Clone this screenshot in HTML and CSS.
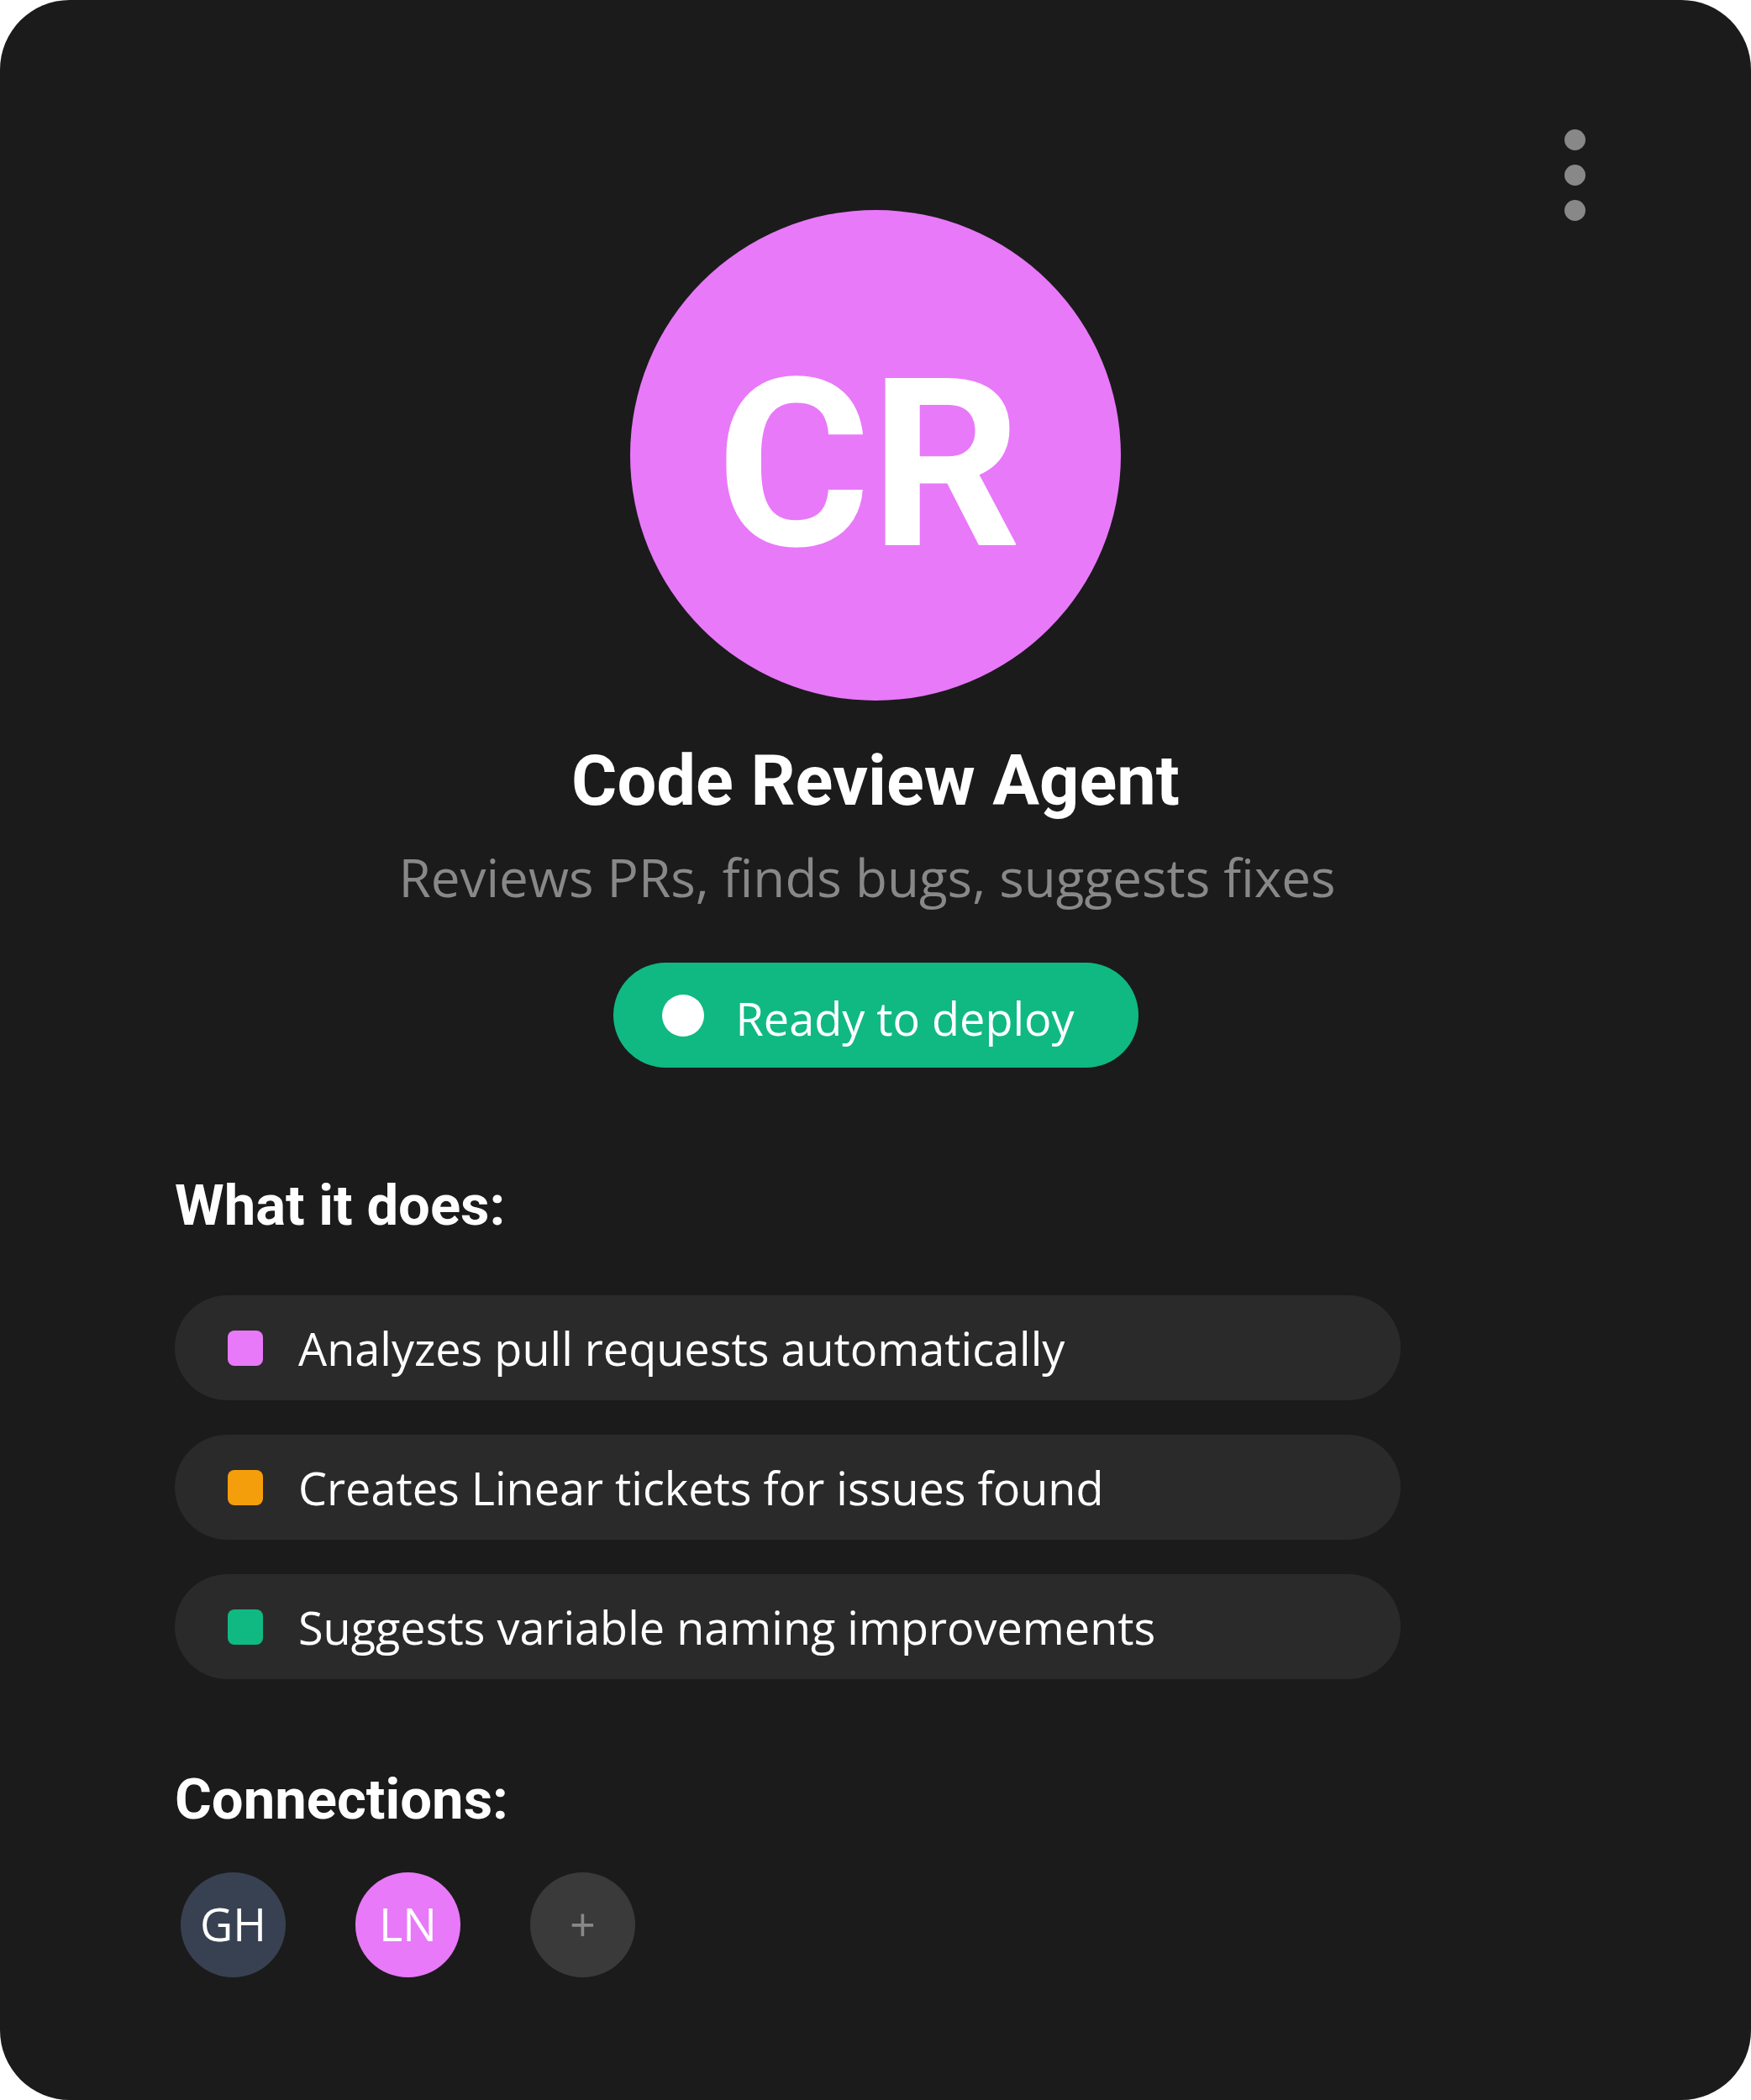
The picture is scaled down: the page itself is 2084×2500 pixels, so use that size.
FILE: index.html
```html
<!DOCTYPE html>
<html lang="en">
<head>
<meta charset="utf-8">
<meta name="viewport" content="width=device-width, initial-scale=1">
<title>Code Review Agent</title>
<link rel="stylesheet" href="styles.css">
</head>
<body>
<main class="card">
  <header class="card-header">
    <div class="avatar">CR</div>
    <button class="menu" type="button" aria-label="More options">
      <span class="menu-dot"></span>
      <span class="menu-dot"></span>
      <span class="menu-dot"></span>
    </button>
  </header>

  <section class="intro">
    <h1 class="title">Code Review Agent</h1>
    <p class="description">Reviews PRs, finds bugs, suggests fixes</p>
    <button class="status" type="button">
      <span class="status-dot"></span>
      <span class="status-label">Ready to deploy</span>
    </button>
  </section>

  <section class="section">
    <h2 class="heading">What it does:</h2>
    <ul class="features">
      <li class="feature"><span class="marker marker-pink"></span>Analyzes pull requests automatically</li>
      <li class="feature"><span class="marker marker-amber"></span>Creates Linear tickets for issues found</li>
      <li class="feature"><span class="marker marker-green"></span>Suggests variable naming improvements</li>
    </ul>
  </section>

  <section class="section section-connections">
    <h2 class="heading">Connections:</h2>
    <div class="connections">
      <button class="connection connection-gh" type="button">GH</button>
      <button class="connection connection-ln" type="button">LN</button>
      <button class="connection connection-add" type="button">+</button>
    </div>
  </section>
</main>
</body>
</html>
```
FILE: styles.css
```css
:root {
  --surface: #1b1b1b;
  --row: #2a2a2a;
  --muted: #888888;
  --pink: #e879f9;
  --amber: #f59e0b;
  --green: #10b981;
  --slate: #374151;
  --display: Roboto, sans-serif;
  --text: "Open Sans", "Noto Sans", sans-serif;
}

* {
  box-sizing: border-box;
}

body,
h1,
h2,
p,
ul {
  margin: 0;
  padding: 0;
}

body {
  background: #ffffff;
  color: #ffffff;
  font-family: var(--text);
  font-size: 54px;
  line-height: 76px;
}

button {
  border: 0;
  padding: 0;
  color: inherit;
  font: inherit;
  cursor: pointer;
}

.card {
  min-height: 100vh;
  padding: 154px 0 146px;
  border-radius: 83px;
  background: var(--surface);
}

.card-header {
  display: grid;
  grid-template-columns: 1fr auto 1fr;
  align-items: start;
}

.avatar {
  grid-column: 2;
  display: flex;
  align-items: center;
  justify-content: center;
  width: 584px;
  height: 584px;
  margin-top: 96px;
  padding: 22px 16px 0 0;
  border-radius: 50%;
  background: var(--pink);
  font: 700 280px/320px var(--display);
}

.menu {
  justify-self: end;
  display: flex;
  flex-direction: column;
  gap: 17px;
  margin-right: 197px;
  background: none;
}

.menu-dot {
  width: 25px;
  height: 25px;
  border-radius: 50%;
  background: var(--muted);
}

.intro {
  display: flex;
  flex-direction: column;
  align-items: center;
  text-align: center;
}

.title {
  margin-top: 46px;
  font: 700 83px/100px var(--display);
}

.description {
  margin-top: 22px;
  padding-right: 20px;
  color: var(--muted);
  font-size: 62px;
  line-height: 84px;
}

.status {
  display: flex;
  align-items: center;
  gap: 38px;
  min-width: 625px;
  min-height: 125px;
  margin-top: 60px;
  padding: 0 58px;
  border-radius: 63px;
  background: var(--green);
}

.status-dot {
  width: 50px;
  height: 50px;
  border-radius: 50%;
  background: #ffffff;
}

.status-label {
  padding-top: 6px;
}

.section {
  padding: 0 208px;
  margin-top: 124px;
}

.section-connections {
  margin-top: 103px;
}

.heading {
  font: 700 67px/80px var(--display);
}

.features {
  display: flex;
  flex-direction: column;
  gap: 41px;
  max-width: 1459px;
  margin-top: 67px;
  list-style: none;
}

.feature {
  display: flex;
  align-items: center;
  gap: 42px;
  min-height: 125px;
  padding: 0 63px;
  border-radius: 63px;
  background: var(--row);
}

.marker {
  flex: none;
  width: 42px;
  height: 42px;
  border-radius: 8px;
}

.marker-pink {
  background: var(--pink);
}

.marker-amber {
  background: var(--amber);
}

.marker-green {
  background: var(--green);
}

.connections {
  display: flex;
  gap: 83px;
  margin-top: 47px;
  padding-left: 7px;
}

.connection {
  width: 125px;
  height: 125px;
  padding-bottom: 4px;
  border-radius: 50%;
}

.connection-gh {
  background: var(--slate);
}

.connection-ln {
  background: var(--pink);
}

.connection-add {
  background: #3a3a3a;
  color: var(--muted);
}
```
